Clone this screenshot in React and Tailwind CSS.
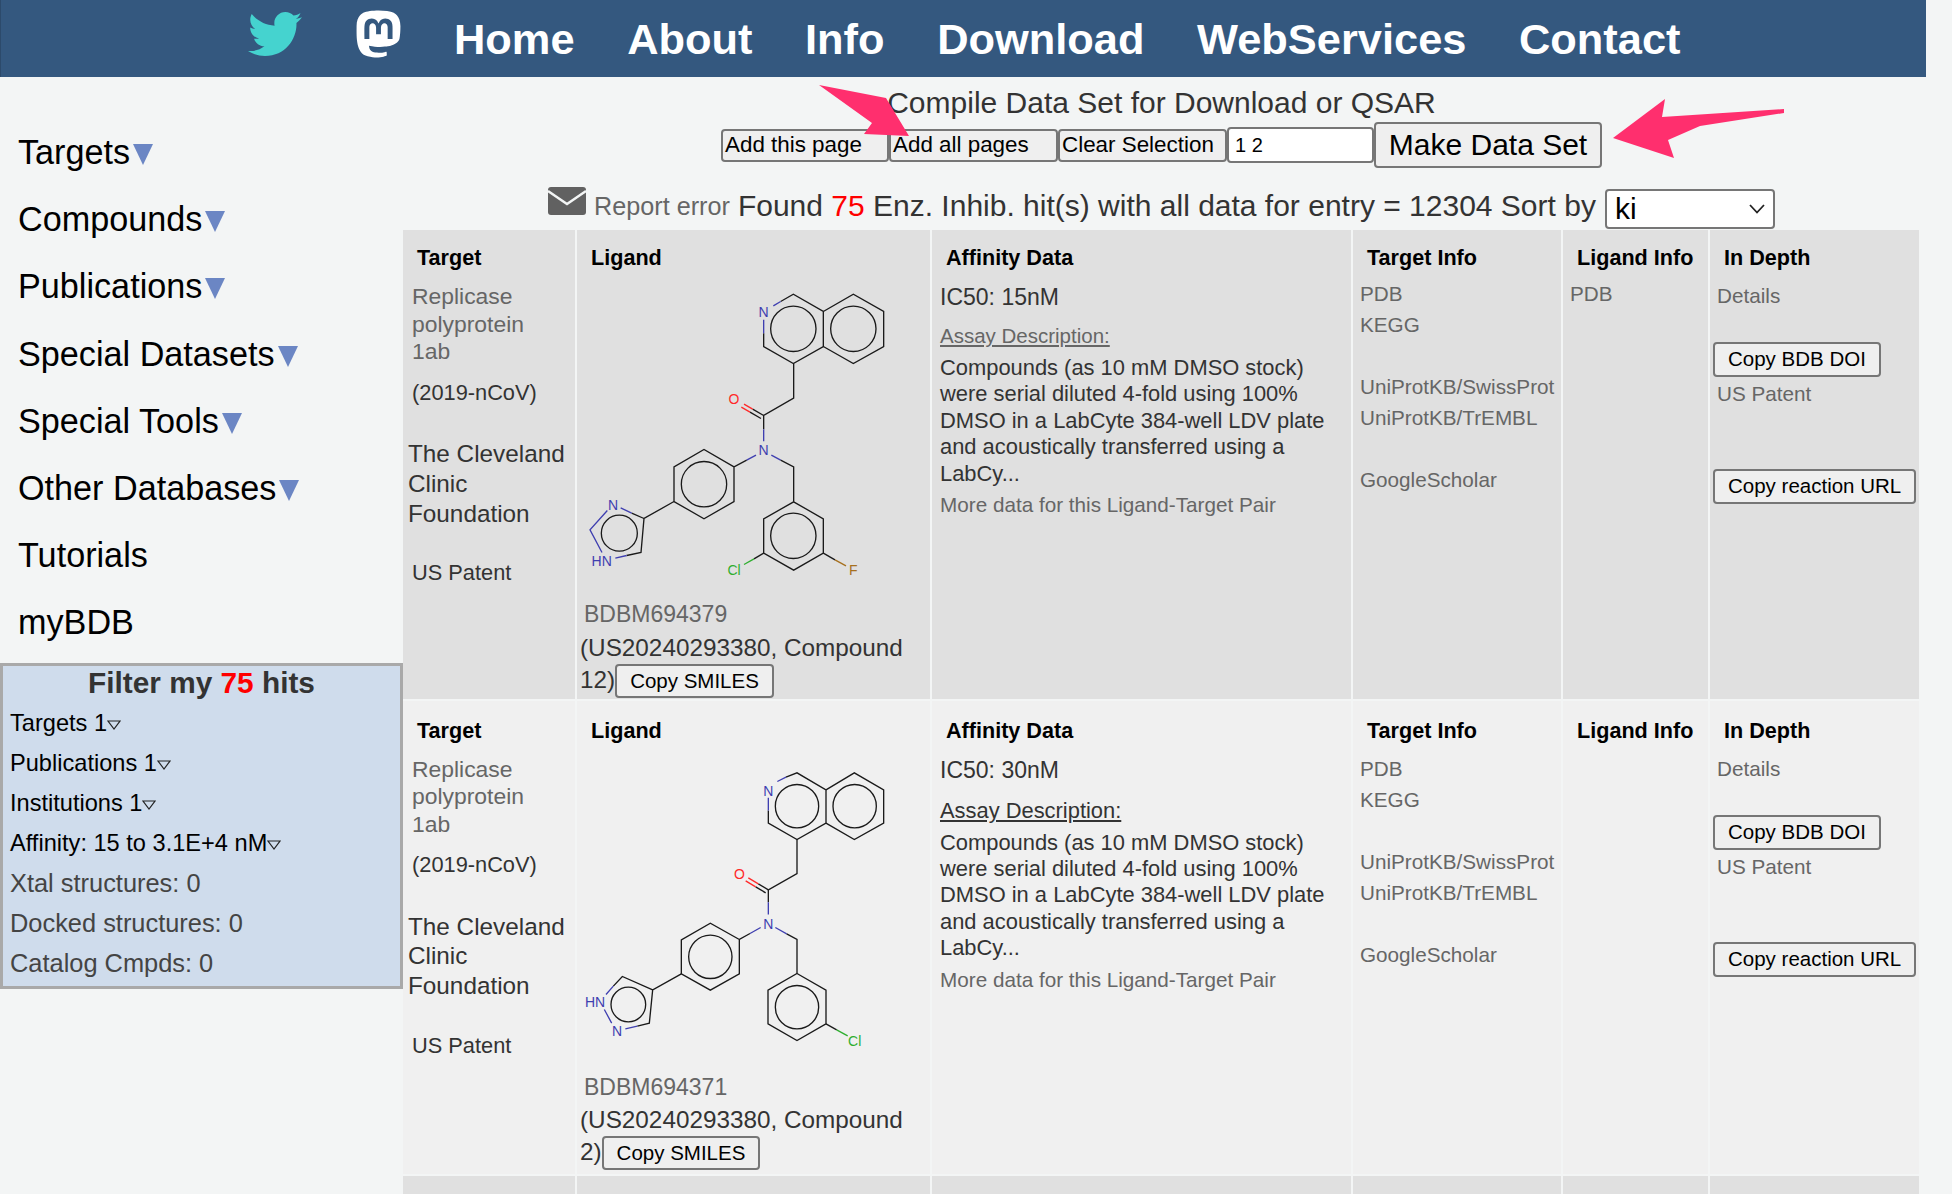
import React from 'react';
import { FaTwitter, FaMastodon } from 'react-icons/fa';

const NAV = ['Home', 'About', 'Info', 'Download', 'WebServices', 'Contact'];
const MENU = [
  ['Targets', true],
  ['Compounds', true],
  ['Publications', true],
  ['Special Datasets', true],
  ['Special Tools', true],
  ['Other Databases', true],
  ['Tutorials', false],
  ['myBDB', false],
];
const FILTERS = [
  ['Targets 1', true],
  ['Publications 1', true],
  ['Institutions 1', true],
  ['Affinity: 15 to 3.1E+4 nM', true],
  ['Xtal structures: 0', false],
  ['Docked structures: 0', false],
  ['Catalog Cmpds: 0', false],
];

const btn = 'border-2 border-[#767676] rounded-[4px] bg-[#efefef] text-black whitespace-nowrap';
const COLS = 'grid grid-cols-[172px_353px_419px_208px_145px_209px] gap-x-[2px]';

const Bond = ({ d, c = '#1a1a1a' }) => <path d={d} stroke={c} strokeWidth="4" fill="none" />;
const Atom = ({ x, y, c, children }) => (
  <text x={x} y={y} fill={c} fontSize="42" textAnchor="middle" fontFamily="'Liberation Sans', sans-serif">
    {children}
  </text>
);

const BLUE = '#3f3fb0';
const RED = '#ff2a2a';
const GREEN = '#2fae2f';

// structure drawings use the coordinates of the 3x crop, hence the viewBox
const MoleculeA = () => (
  <svg viewBox="21 130 1059 950" className="block w-[353px] h-[317px]">
    <Bond d="M632 215 L670 193 L760 245 L760 350 L670 401 L581 350 L581 310" />
    <Bond d="M581 310 L581 270 M610 228 L632 215" c={BLUE} />
    <Bond d="M760 245 L850 193 L941 245 L941 350 L850 401 L760 350" />
    <circle cx="670" cy="297" r="68" stroke="#1a1a1a" strokeWidth="4" fill="none" />
    <circle cx="850" cy="297" r="68" stroke="#1a1a1a" strokeWidth="4" fill="none" />
    <Bond d="M671 401 L671 505 L581 557 L581 598" />
    <Bond d="M581 598 L581 634" c={BLUE} />
    <Bond d="M581 557 L548 538 M573 566 L540 547" />
    <Bond d="M548 538 L522 523 M540 547 L514 532" c={RED} />
    <Bond d="M604 676 L632 691" c={BLUE} />
    <Bond d="M632 691 L671 711 L671 816" />
    <Bond d="M671 816 L760 867 L760 970 L671 1021 L581 970 L581 867 Z" />
    <circle cx="670" cy="918" r="68" stroke="#1a1a1a" strokeWidth="4" fill="none" />
    <Bond d="M760 970 L795 990" />
    <Bond d="M795 990 L828 1008" c="#a6701f" />
    <Bond d="M581 970 L552 987" />
    <Bond d="M552 987 L522 1004" c={GREEN} />
    <Bond d="M558 676 L530 691" c={BLUE} />
    <Bond d="M530 691 L492 711 L492 815 L402 867 L312 815 L312 711 L402 659 L492 711" />
    <circle cx="402" cy="763" r="68" stroke="#1a1a1a" strokeWidth="4" fill="none" />
    <Bond d="M312 815 L222 866 L213 968 L170 977" />
    <Bond d="M222 866 L185 850" />
    <Bond d="M170 977 L136 985 M185 850 L152 834 M112 842 L60 900 L96 968" c={BLUE} />
    <circle cx="148" cy="910" r="54" stroke="#1a1a1a" strokeWidth="4" fill="none" />
    <Atom x="581" y="261" c={BLUE}>N</Atom>
    <Atom x="492" y="522" c={RED}>O</Atom>
    <Atom x="581" y="677" c={BLUE}>N</Atom>
    <Atom x="129" y="842" c={BLUE}>N</Atom>
    <Atom x="95" y="1008" c={BLUE}>HN</Atom>
    <Atom x="492" y="1037" c={GREEN}>Cl</Atom>
    <Atom x="850" y="1037" c="#a6701f">F</Atom>
  </svg>
);

const MoleculeB = () => (
  <svg viewBox="21 155 1059 950" className="block w-[353px] h-[317px]">
    <Bond d="M648 230 L681 217 L768 268 L768 368 L681 417 L595 368 L595 330" />
    <Bond d="M595 330 L595 292 M622 243 L648 230" c={BLUE} />
    <Bond d="M768 268 L853 217 L941 268 L941 368 L853 417 L768 368" />
    <circle cx="681" cy="317" r="65" stroke="#1a1a1a" strokeWidth="4" fill="none" />
    <circle cx="854" cy="317" r="65" stroke="#1a1a1a" strokeWidth="4" fill="none" />
    <Bond d="M681 417 L681 519 L595 568 L595 605" />
    <Bond d="M595 605 L595 642" c={BLUE} />
    <Bond d="M595 568 L565 550 M587 577 L557 559" />
    <Bond d="M565 550 L535 532 M557 559 L527 541" c={RED} />
    <Bond d="M616 681 L650 700" c={BLUE} />
    <Bond d="M650 700 L681 717 L681 819" />
    <Bond d="M681 819 L768 869 L768 970 L681 1020 L594 970 L594 869 Z" />
    <circle cx="681" cy="920" r="65" stroke="#1a1a1a" strokeWidth="4" fill="none" />
    <Bond d="M768 970 L800 988" />
    <Bond d="M800 988 L833 1006" c={GREEN} />
    <Bond d="M572 681 L540 699" c={BLUE} />
    <Bond d="M540 699 L508 717 L508 820 L421 869 L334 820 L334 718 L421 668 L508 717" />
    <circle cx="421" cy="769" r="65" stroke="#1a1a1a" strokeWidth="4" fill="none" />
    <Bond d="M334 820 L248 868 L238 968 L202 977 M248 868 L157 828 L130 857" />
    <Bond d="M202 977 L166 985 M130 857 L108 882 M103 927 L125 968" c={BLUE} />
    <circle cx="175" cy="912" r="52" stroke="#1a1a1a" strokeWidth="4" fill="none" />
    <Atom x="595" y="285" c={BLUE}>N</Atom>
    <Atom x="508" y="535" c={RED}>O</Atom>
    <Atom x="595" y="685" c={BLUE}>N</Atom>
    <Atom x="75" y="920" c={BLUE}>HN</Atom>
    <Atom x="141" y="1006" c={BLUE}>N</Atom>
    <Atom x="854" y="1036" c={GREEN}>Cl</Atom>
  </svg>
);

const Head = ({ children }) => (
  <div className="h-[28px] leading-[28px] text-[21.6px] font-bold text-black pl-[14px]">{children}</div>
);

const RESULTS = [
  {
    bg: 'bg-[#e0e0e0]', h: 'h-[469px]', pt: 'pt-[14px]', mol: <MoleculeA />, id: 'BDBM694379', cmp: '12)', pdb: true,
    assay: 'mt-[11px] text-[#666666] text-[20.5px]', molMt: 'mt-[1px]', idMt: 'mt-[9px]', usMt: 'mt-[3px]', linkMt: 'mt-[6px]',
  },
  {
    bg: 'bg-[#f0f0f0]', h: 'h-[473px]', pt: 'pt-[15.5px]', mol: <MoleculeB />, id: 'BDBM694371', cmp: '2)', pdb: false,
    assay: 'mt-[13px] text-[#333333] text-[21.9px]', molMt: 'mt-[7px]', idMt: 'mt-[3.5px]', usMt: 'mt-[2px]', linkMt: 'mt-[8px]', nm: '30nM',
  },
];

const Row = ({ r }) => (
  <div className={`${COLS} ${r.h}`}>
    {/* target */}
    <div className={`${r.bg} ${r.pt} text-[21.8px]`}>
      <Head>Target</Head>
      <div className="pl-[9px] mt-[11px] leading-[27.5px] text-[22.9px] text-[#666666] w-[140px]">Replicase polyprotein 1ab</div>
      <div className="pl-[9px] mt-[13px] leading-[27.5px] text-[#333333]">(2019-nCoV)</div>
      <div className="pl-[5px] mt-[33px] leading-[29.8px] text-[24.3px] text-[#333333]">
        The Cleveland
        <br />
        Clinic
        <br />
        Foundation
      </div>
      <div className="pl-[9px] mt-[31px] leading-[27.5px] text-[#333333]">US Patent</div>
    </div>
    {/* ligand */}
    <div className={`${r.bg} ${r.pt}`}>
      <Head>Ligand</Head>
      <div className={r.molMt}>{r.mol}</div>
      <div className={`pl-[7px] ${r.idMt} leading-[30px] text-[23px] text-[#666666]`}>{r.id}</div>
      <div className={`pl-[3px] ${r.usMt} leading-[32px] text-[24.3px] text-[#333333]`}>
        (US20240293380, Compound
        <br />
        {r.cmp}
        <button className={`${btn} h-[34px] px-[13px] text-[20.5px] leading-none align-baseline`}>Copy SMILES</button>
      </div>
    </div>
    {/* affinity */}
    <div className={`${r.bg} ${r.pt}`}>
      <Head>Affinity Data</Head>
      <div className="pl-[8px] mt-[11px] leading-[28px] text-[23px] text-[#333333]">IC50: {r.nm || '15nM'}</div>
      <div className={`pl-[8px] leading-[28px] underline ${r.assay}`}>Assay Description:</div>
      <div className="pl-[8px] mt-[5px] leading-[26.4px] text-[21.9px] text-[#333333] w-[400px]">
        Compounds (as 10 mM DMSO stock) were serial diluted 4-fold using 100% DMSO in a LabCyte 384-well LDV plate and acoustically transferred using a LabCy...
      </div>
      <div className="pl-[8px] mt-[4px] leading-[28px] text-[20.7px] text-[#666666]">More data for this Ligand-Target Pair</div>
    </div>
    {/* target info */}
    <div className={`${r.bg} ${r.pt} text-[20.7px] text-[#666666]`}>
      <Head>Target Info</Head>
      <div className={`pl-[7px] ${r.linkMt} leading-[31px]`}>
        <div>PDB</div>
        <div>KEGG</div>
        <div className="mt-[31px]">UniProtKB/SwissProt</div>
        <div>UniProtKB/TrEMBL</div>
        <div className="mt-[31px]">GoogleScholar</div>
      </div>
    </div>
    {/* ligand info */}
    <div className={`${r.bg} ${r.pt} text-[20.7px] text-[#666666]`}>
      <Head>Ligand Info</Head>
      {r.pdb && <div className={`pl-[7px] ${r.linkMt} leading-[31px]`}>PDB</div>}
    </div>
    {/* in depth */}
    <div className={`${r.bg} ${r.pt} text-[20.7px] text-[#666666]`}>
      <Head>In Depth</Head>
      <div className="pl-[7px] mt-[8px] leading-[31px]">Details</div>
      <button className={`${btn} block ml-[3px] mt-[31px] h-[35px] px-[13px] text-[20.5px] leading-none`}>Copy BDB DOI</button>
      <div className="pl-[7px] mt-[1px] leading-[31px]">US Patent</div>
      <button className={`${btn} block ml-[3px] mt-[60px] h-[35px] px-[13px] text-[20.5px] leading-none`}>Copy reaction URL</button>
    </div>
  </div>
);

export default function App() {
  return (
    <div className="relative h-[1194px] overflow-hidden bg-[#f3f5f5] font-['Liberation_Sans',Arial,sans-serif]">
      <header className="w-[1926px] h-[77px] bg-[#34587f] flex items-center pl-[247px] border-l border-[#2c4a6b]">
        <FaTwitter className="w-[54px] h-[54px] text-[#45d3cf] -mt-[10px]" />
        <FaMastodon className="ml-[53px] w-[47px] h-[54px] text-white -mt-[10px]" />
        <nav className="flex ml-[52px] mt-[2px] gap-x-[52.6px] text-[43.4px] font-bold text-white">
          {NAV.map(n => (
            <span key={n}>{n}</span>
          ))}
        </nav>
      </header>

      <div className="flex">
        <aside className="w-[403px] shrink-0">
          <ul className="pt-[42px] pl-[18px] text-[34.2px] text-black">
            {MENU.map(([label, arrow]) => (
              <li key={label} className="h-[67.2px] leading-[67.2px] flex items-center">
                {label}
                {arrow && (
                  <svg viewBox="0 0 20 21" className="ml-[3px] w-[20px] h-[21px] mt-[4px]">
                    <path d="M0 0H20L10 21Z" fill="#6b86c4" />
                  </svg>
                )}
              </li>
            ))}
          </ul>
          <div className="mt-[6px] h-[326px] border-[3px] border-[#a9a9a9] bg-[#cfdcec] pl-[7px]">
            <div className="-ml-[7px] -mt-[1px] mb-[2.5px] text-center font-bold text-[29.8px] leading-[36px] text-[#333333]">
              Filter my <span className="text-[#ff0000]">75</span> hits
            </div>
            {FILTERS.map(([label, arrow]) => (
              <div key={label} className={`h-[40px] leading-[40px] flex items-center ${arrow ? 'text-black text-[23.6px]' : 'text-[#444444] text-[25.4px]'}`}>
                {label}
                {arrow && (
                  <svg viewBox="0 0 14 10" className="w-[14px] h-[10px] mt-[4px]">
                    <path d="M1 1H13L7 9Z" fill="none" stroke="#222222" strokeWidth="1.2" />
                  </svg>
                )}
              </div>
            ))}
          </div>
        </aside>

        <main className="w-[1517px] shrink-0 text-[#333333]">
          <div className="text-center text-[30px] leading-[36px] h-[36px] mt-[8px]">Compile Data Set for Download or QSAR</div>
          <div className="flex justify-center items-center h-[48px] text-[22.4px] text-black">
            <button className={`${btn} w-[168px] h-[33px] text-left pl-[2px] leading-none`}>Add this page</button>
            <button className={`${btn} w-[169px] h-[33px] text-left pl-[2px] leading-none`}>Add all pages</button>
            <button className={`${btn} w-[169px] h-[33px] text-left pl-[2px] leading-none`}>Clear Selection</button>
            <div className="w-[147px] h-[36px] border-2 border-[#767676] rounded-[4px] bg-white pl-[6px] text-[20px] leading-[32px]">1 2</div>
            <button className={`${btn} w-[228px] h-[46px] text-[30px] leading-none`}>Make Data Set</button>
          </div>
          <div className="flex justify-center items-center h-[42px] mt-[15px]">
            <svg viewBox="0 0 38 28" className="w-[38px] h-[28px] -mt-[8px]">
              <rect width="38" height="28" rx="3" fill="#616161" />
              <path d="M0 4L19 17L38 4" fill="none" stroke="#f3f5f5" strokeWidth="2.4" />
            </svg>
            <span className="ml-[8px] mt-[4px] text-[25.2px] text-[#666666]">Report error</span>
            <span className="ml-[8px] text-[30px]">
              Found <span className="text-[#ff0000]">75</span> Enz. Inhib. hit(s) with all data for entry = 12304 Sort by
            </span>
            <div className="ml-[9px] mt-[8px] w-[170px] h-[40px] border-2 border-[#767676] rounded-[4px] bg-white pl-[8px] text-[30px] leading-[38px] text-black flex items-center justify-between pr-[8px]">
              ki
              <svg viewBox="0 0 16 10" className="w-[16px] h-[10px]">
                <path d="M1 1L8 8.5L15 1" fill="none" stroke="#222222" strokeWidth="1.8" />
              </svg>
            </div>
          </div>
          <div className="flex flex-col gap-y-[2px] mt-[4px]">
            {RESULTS.map(r => (
              <Row key={r.id} r={r} />
            ))}
            {/* next result starts right at the fold, only its cells show */}
            <div className={`${COLS} h-[40px]`}>
              {[1, 2, 3, 4, 5, 6].map(i => (
                <div key={i} className="bg-[#e0e0e0]" />
              ))}
            </div>
          </div>
        </main>
      </div>

      {/* annotation arrows drawn over the page */}
      <svg className="absolute left-0 top-0 w-[1952px] h-[200px] pointer-events-none" viewBox="0 0 1952 200">
        <path d="M819 85 L886 98 L909 136 L864 134 L872 123 Z" fill="#ff2f6e" />
        <path d="M1613 138 L1665 99 L1662 117 L1784 109 L1784 113 L1700 126 L1668 140 L1674 158 Z" fill="#ff2f6e" />
      </svg>
    </div>
  );
}
